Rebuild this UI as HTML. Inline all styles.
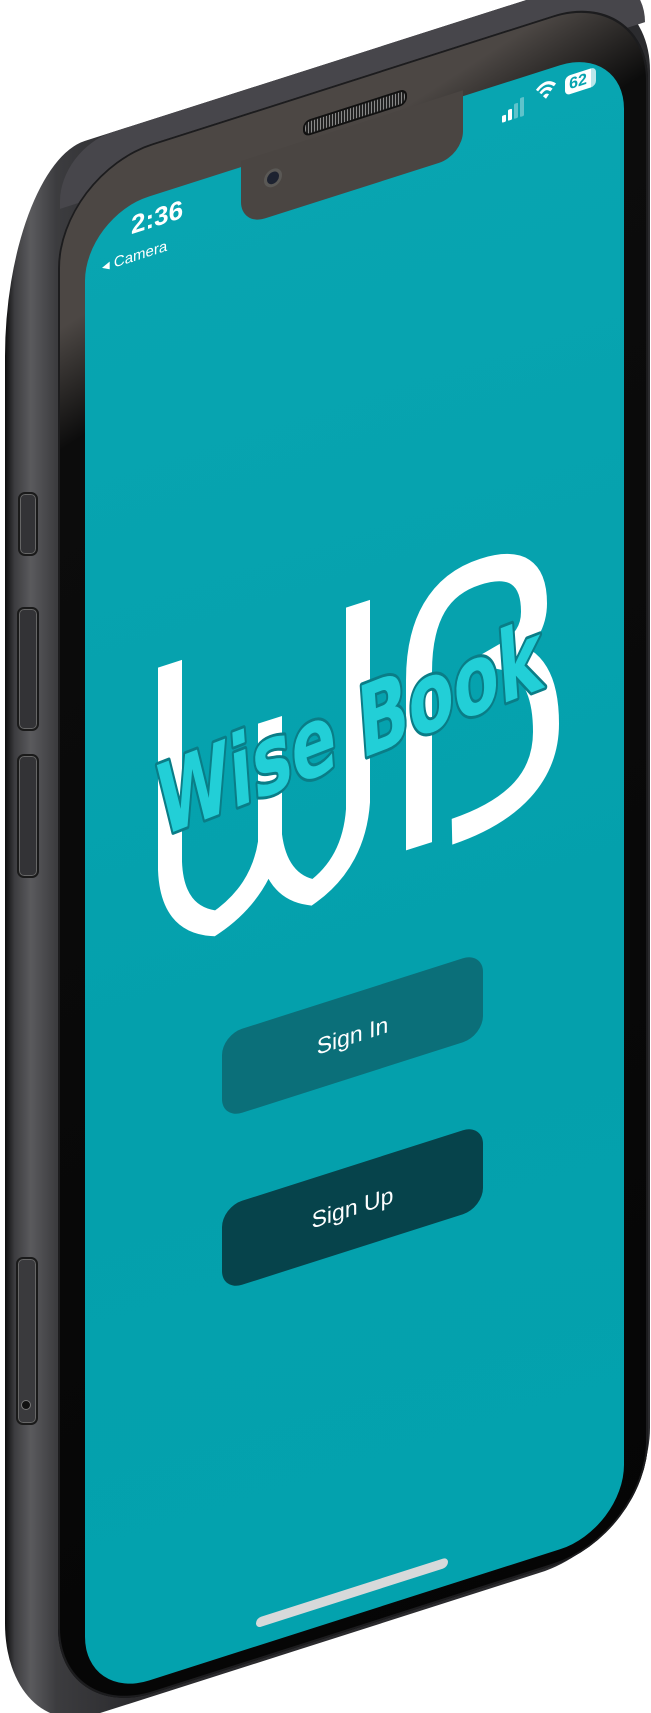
<!DOCTYPE html>
<html><head><meta charset="utf-8"><style>
html,body{margin:0;padding:0;background:#fff;width:651px;height:1713px;overflow:hidden;position:relative;font-family:"Liberation Sans",sans-serif}
.f{position:absolute;left:0;top:0;width:651px;height:1713px;transform-origin:0 0;transform:skewY(-17.7deg)}
.a{position:absolute}
.body{left:5px;top:168px;width:645px;height:1577px;border-radius:80px 110px 110px 90px / 190px 110px 110px 120px;background:linear-gradient(to right,#0d0d0d 0,#3d3d40 1.5%,#5a5a5d 4%,#3c3c3f 8%,#2b2b2e 20%,#2b2b2e 100%)}
.topband{left:60px;top:168px;width:585px;height:60px;border-radius:95px 110px 0 0;background:#47464b}
.front{left:58px;top:192px;width:590px;height:1550px;border-radius:95px;background:linear-gradient(162deg,#4c4744 0%,#4c4744 9%,#0c0c0c 16%,#050505 100%);box-shadow:inset 0 0 0 2px #1c1c1e}
.screen{left:85px;top:244px;width:539px;height:1484px;border-radius:64px;background:linear-gradient(180deg,#08a5b1 0%,#04a0ac 60%,#03a2ae 100%);overflow:hidden}
.notch{left:241px;top:238px;width:222px;height:65px;border-radius:0 0 24px 24px;background:#4a4542}
.spk{left:303px;top:218px;width:100px;height:12px;border-radius:7px;background:repeating-linear-gradient(90deg,#8a8a8a 0 1px,#222 1px 3px);border:2px solid #111}
.cam{left:264px;top:256px;width:12px;height:12px;border-radius:50%;background:#1d2230;border:3px solid #5a5855}
.btn{left:222px;width:261px;height:84px;border-radius:20px;color:#fff;font-size:23px;text-align:center;line-height:84px}
.side{position:absolute;border:2px solid #1a1a1a;background:#333336;border-radius:7px;box-shadow:inset 0 0 0 1px #666}
</style></head><body>
<div class="f">
  <div class="a body"></div>
  <div class="a topband"></div>
  <div class="a front"></div>
  <div class="a screen"></div>
  <div class="a notch"></div>
  <div class="a spk"></div>
  <div class="a cam"></div>
  <div class="a" style="left:131px;top:254px;font-size:26px;font-weight:bold;color:#fff;line-height:26px">2:36</div>
  <div class="a" style="left:102px;top:292px;font-size:15px;color:#fff;line-height:16px"><span style="font-size:10px;vertical-align:1px">◀</span> Camera</div>
  <div class="a" style="left:502px;top:276px;width:4px;height:7px;background:#fff;border-radius:1px"></div>
  <div class="a" style="left:508px;top:272px;width:4px;height:11px;background:#fff;border-radius:1px"></div>
  <div class="a" style="left:514px;top:268px;width:4px;height:15px;background:#5fc3cb;border-radius:1px"></div>
  <div class="a" style="left:520px;top:264px;width:4px;height:19px;background:#5fc3cb;border-radius:1px"></div>
  <svg class="a" style="left:535px;top:254px" width="22" height="22" viewBox="0 0 22 22"><path d="M2 8 Q11 -1 20 8" stroke="#fff" stroke-width="3" fill="none"/><path d="M5.5 12 Q11 6 16.5 12" stroke="#fff" stroke-width="3" fill="none"/><path d="M8 15.5 L11 19 L14 15.5 Q11 12.5 8 15.5Z" fill="#fff"/></svg>
  <div class="a" style="left:565px;top:257px;width:26px;height:19px;background:#fff;border-radius:5px 0 0 5px;color:#07a3af;font-size:16px;font-weight:bold;line-height:19px;text-align:center">62</div>
  <div class="a" style="left:591px;top:257px;width:5px;height:19px;background:#b9e6ea;border-radius:0 5px 5px 0"></div>
  <svg class="a" style="left:0;top:0" width="651" height="1100" viewBox="0 0 651 1100">
    <path d="M170 718 V920 Q172 975 215 992 Q262 975 270 925 V806 M270 925 Q276 975 312 992 Q354 975 358 920 V718" stroke="#fff" stroke-width="24" fill="none"/>
    <path d="M419 980 V810 Q419 725 480 725 Q534 725 534 778 Q534 808 503 816 Q546 836 546 902 Q546 974 452 976" stroke="#fff" stroke-width="26" fill="none"/>
    <text x="160" y="888" font-family="DejaVu Sans,sans-serif" font-weight="bold" font-size="100" textLength="385" lengthAdjust="spacingAndGlyphs" fill="#22cfd7" stroke="#0a7d87" stroke-width="6" paint-order="stroke" stroke-linejoin="round" transform="rotate(-4 160 888)">Wise Book</text>
  </svg>
  <div class="a btn" style="top:1106px;background:#0b6f79">Sign In</div>
  <div class="a btn" style="top:1278px;background:#06434b">Sign Up</div>
  <div class="a" style="left:256px;top:1700px;width:192px;height:10px;border-radius:5px;background:#d7d9da"></div>
</div>
<div class="side" style="left:18px;top:492px;width:16px;height:60px"></div>
<div class="side" style="left:17px;top:607px;width:18px;height:120px"></div>
<div class="side" style="left:17px;top:754px;width:18px;height:120px"></div>
<div class="side" style="left:16px;top:1257px;width:18px;height:164px;background:#3a3a3d"></div>
<div style="position:absolute;left:21px;top:1400px;width:8px;height:8px;border-radius:50%;background:#111;border:1px solid #777"></div>
</body></html>
